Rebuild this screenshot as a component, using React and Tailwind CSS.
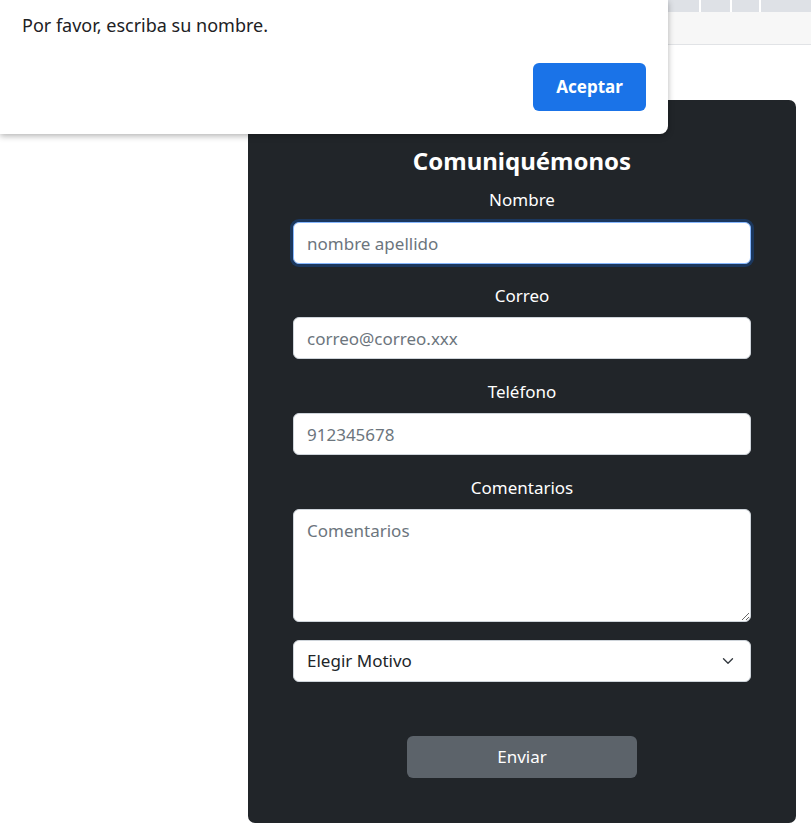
import { ChevronDown } from "lucide-react";

function Field({ label, children }) {
  return (
    <div className="flex flex-col items-center">
      <label className="mb-[8px] h-[26px] text-[17px] leading-[26px] text-white">{label}</label>
      {children}
    </div>
  );
}

export default function App() {
  return (
    <div className="relative min-h-screen bg-white font-['Noto_Sans',sans-serif]">
      {/* barra del navegador por detrás */}
      <div className="h-[12px] bg-[#dee1e6] flex justify-end">
        <div className="flex h-full pr-[50px]">
          <div className="w-[2px] bg-white mr-[29px]" />
          <div className="w-[2px] bg-white mr-[27px]" />
          <div className="w-[2px] bg-white" />
        </div>
      </div>
      <div className="h-[33px] border-b border-[#e1e3e6] bg-[#f7f7f7]" />

      <main className="pl-[248px] pt-[55px] pb-[12px]">
        <form className="w-[548px] rounded-[7px] bg-[#212529] px-[45px] pt-[45px] pb-[45px]">
          <h2 className="mb-[10px] text-center text-[24px] font-bold leading-[32px] text-white">Comuniquémonos</h2>

          <div className="flex flex-col items-center">
            <label className="mb-[9px] h-[26px] text-[17px] leading-[26px] text-white">Nombre</label>
            <input
              className="h-[42px] w-full rounded-[6px] border border-[#86b7fe] bg-white px-[13px] text-[17px] text-[#212529] placeholder-[#6c757d] shadow-[0_0_0_3px_rgba(13,110,253,0.25)] outline-none"
              placeholder="nombre apellido"
            />
          </div>

          <div className="mt-[19px]">
            <Field label="Correo">
              <input
                className="h-[42px] w-full rounded-[6px] border border-[#ced4da] bg-white px-[13px] text-[17px] placeholder-[#6c757d] outline-none"
                placeholder="correo@correo.xxx"
              />
            </Field>
          </div>

          <div className="mt-[20px]">
            <Field label="Teléfono">
              <input
                className="h-[42px] w-full rounded-[6px] border border-[#ced4da] bg-white px-[13px] text-[17px] placeholder-[#6c757d] outline-none"
                placeholder="912345678"
              />
            </Field>
          </div>

          <div className="mt-[20px]">
            <Field label="Comentarios">
              <textarea
                className="h-[113px] w-full resize-y rounded-[6px] border border-[#ced4da] bg-white px-[13px] py-[8px] text-[17px] leading-[26px] placeholder-[#6c757d] outline-none"
                placeholder="Comentarios"
              />
            </Field>
          </div>

          <div className="relative mt-[18px]">
            <select className="h-[42px] w-full appearance-none rounded-[6px] border border-[#ced4da] bg-white px-[13px] text-[17px] text-[#212529] outline-none">
              <option>Elegir Motivo</option>
            </select>
            <ChevronDown className="pointer-events-none absolute right-[14px] top-[12px] h-[18px] w-[18px] text-[#343a40]" strokeWidth={1.8} />
          </div>

          <div className="mt-[54px] flex justify-center">
            <button
              type="button"
              className="h-[42px] w-[230px] rounded-[6px] bg-[#5c636a] text-[17px] text-white"
            >
              Enviar
            </button>
          </div>
        </form>
      </main>

      {/* diálogo de alerta */}
      <div className="absolute left-0 top-0 h-[134px] w-[668px] rounded-br-[8px] bg-white shadow-[0_2px_6px_rgba(0,0,0,0.3)]">
        <p className="pl-[22px] pt-[12px] text-[18px] leading-[26px] text-[#202124]">Por favor, escriba su nombre.</p>
        <div className="mt-[25px] flex justify-end pr-[22px]">
          <button type="button" className="h-[48px] w-[113px] rounded-[6px] bg-[#1a73e8] text-[17px] font-bold text-white">
            Aceptar
          </button>
        </div>
      </div>
    </div>
  );
}
